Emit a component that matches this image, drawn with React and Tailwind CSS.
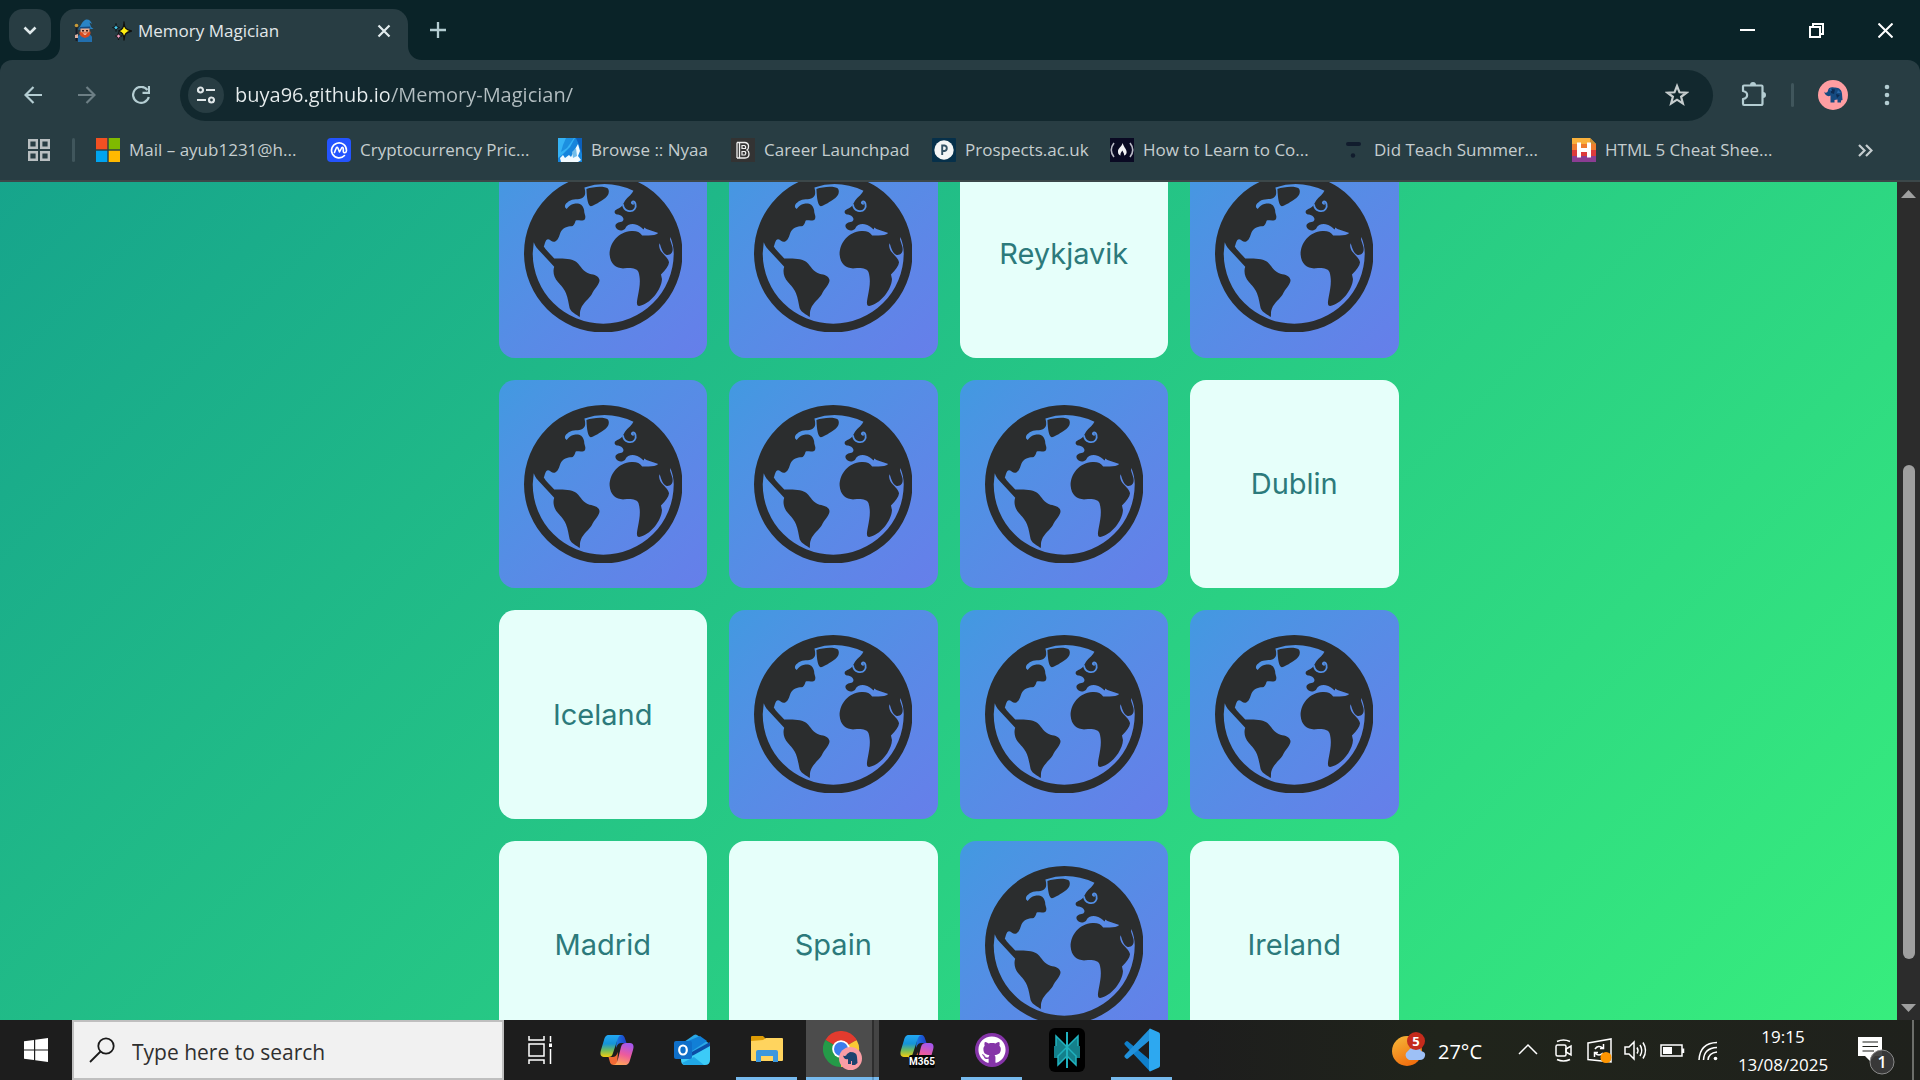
import React from "react";
import { FaGithub } from "react-icons/fa";

/* ---------- game ---------- */

function Globe() {
  return (
    <svg viewBox="105 105 472 472" className="w-[76%]" aria-hidden="true">
      <path
        fill="#2b2d2e"
        fillRule="evenodd"
        d="M105 341a236 236 0 1 0 472 0a236 236 0 1 0 -472 0Z
        M285 145Q358 121 431 155C425 168 410 176 403 190L398 199C388 211 374 209 375 220C378 229 390 224 398 232C405 240 400 247 392 248C380 250 374 257 379 265C386 276 399 275 406 268C412 254 428 252 440 256C452 260 456 267 462 270L463 264L470 269L505 281C495 290 480 288 457 288C450 278 440 274 425 275C385 278 360 310 360 345C362 375 382 388 405 386C425 384 441 386 446 397C453 420 450 440 444 470C440 490 440 498 448 498C480 494 515 450 516 418L513 404C528 390 536 378 537 368C535 355 520 345 513 335C508 325 506 318 509 311C514 325 518 342 530 346C545 347 550 335 547 322L540 300L541 293C548 310 551 325 551 341A210 210 0 0 1 131 341L134 308C138 320 145 327 155 338L195 381C190 395 194 414 206 427C215 438 222 443 230 460C236 475 238 492 241 505C248 520 262 524 271 531C273 520 270 517 275 505C281 490 300 475 306 465C315 445 330 435 330 421C328 408 315 405 300 402C280 396 275 380 262 368C250 357 225 356 195 357C185 345 170 332 164 321C168 312 168 300 177 299C185 300 188 309 198 306C210 300 210 285 216 275C226 260 240 262 250 260C260 252 256 242 262 243C275 243 284 245 287 238C290 228 284 225 284 212C280 195 270 192 258 193C240 196 238 205 232 209C224 205 226 195 234 190C245 178 262 182 275 178C290 172 287 160 287 155Z
        M291 150C310 142 345 140 355 148C362 160 355 172 340 182C325 192 312 200 304 201C296 200 292 180 291 150Z"
      />
      <path d="M400 197C402 217 426 220 434 210C442 200 436 186 429 187C424 189 426 193 430 194" fill="none" stroke="#528fe6" strokeWidth="5.500" strokeLinecap="round" />
    </svg>
  );
}

const cards = [
  null, null, "Reykjavik", null,
  null, null, null, "Dublin",
  "Iceland", null, null, null,
  "Madrid", "Spain", null, "Ireland",
];

function Card({ label }) {
  return label ? (
    <button className="flex aspect-square items-center justify-center rounded-2xl bg-[#e6fffa] font-['Inter',sans-serif] text-[29px] text-[#2c7a7b]">
      {label}
    </button>
  ) : (
    <button aria-label="Hidden card" className="flex aspect-square items-center justify-center rounded-2xl bg-linear-135 from-[#4299e1] to-[#667eea]">
      <Globe />
    </button>
  );
}

function Game() {
  return (
    <main className="flex min-h-0 flex-1 overflow-hidden">
      <div className="min-w-0 flex-1 overflow-hidden">
        <div className="-mt-[440px] bg-[linear-gradient(135deg,#11998e,#38ef7d)] pt-[407px] pb-10">
          <div className="mx-auto grid max-w-[900px] grid-cols-4 gap-[22px]">
            {cards.map((c, i) => <Card key={i} label={c} />)}
          </div>
        </div>
      </div>
      <div className="flex w-[23px] flex-col items-center bg-[#2c2c2c]">
        <div className="flex h-6 items-center"><svg width="15" height="8" viewBox="0 0 15 8"><path d="M0 8L7.500 0L15 8Z" fill="#9f9f9f" /></svg></div>
        <div className="grow-[259]" />
        <div className="w-3 grow-[494] rounded-full bg-[#9f9f9f]" />
        <div className="grow-[37]" />
        <div className="flex h-6 items-center"><svg width="15" height="8" viewBox="0 0 15 8"><path d="M0 0L7.500 8L15 0Z" fill="#9f9f9f" /></svg></div>
      </div>
    </main>
  );
}

/* ---------- shared drawings ---------- */

function Elephant({ size }) {
  return (
    <svg width={size} height={size} viewBox="0 0 30 30">
      <circle cx="15" cy="15" r="15" fill="#ff9ea2" />
      <path d="M6 11.500C7 13.500 9.500 13 10 10.500C10.500 7.500 13 7 16 7.500C21 7 24 10 24 14L24.500 20L23 20.500V22.500H19.500V19.500L16.500 20V22.500H12.500V15.500C10.500 17 7 16 6 11.500Z" fill="#154a80" />
      <path d="M13 9L17 9.500L16 14L13 13ZM18 14L22 15L19 18Z" fill="#0c2c54" />
      <path d="M11 10L13 8L14 11Z M20 10L23 13L19 13Z" fill="#2a68a8" />
    </svg>
  );
}

/* ---------- tab strip ---------- */

function Wizard() {
  return (
    <svg width="20" height="24" viewBox="0 0 20 24">
      <path d="M5 9C7 7 8 2 12 0.500C15 0 17 2 18 5L15.500 3.500L17 8L19.500 10L4 10.500Z" fill="#2a84c6" />
      <path d="M6 8L16 7.500L16.500 9.500L5 10Z" fill="#174a80" />
      <path d="M6.500 9.500H15.500V14H6.500Z" fill="#e8a88c" />
      <path d="M8 11h2v1.500H8ZM12 11h2v1.500H12Z" fill="#3a1c1c" />
      <path d="M4 23V17L7 14.500H15L18 17.500V23Z" fill="#226fae" />
      <path d="M5.500 12.500L8 13.500H14L16.500 12.500C17 17 14 18 11 19C8 18 5 17 5.500 12.500Z" fill="#d84a20" />
      <path d="M8.500 14.500H13.500L11 16Z" fill="#f5e3d8" />
      <path d="M2.500 7V22" stroke="#161b29" strokeWidth="1.800" />
      <circle cx="2.500" cy="6.500" r="1.800" fill="#c79a37" />
      <path d="M1 16L4 15V19L1 19Z" fill="#dcb0a0" />
    </svg>
  );
}

function Sparkles() {
  return (
    <svg width="20" height="20" viewBox="0 0 20 20" stroke="#101010" strokeLinejoin="round">
      <path d="M12 1C12.300 7 13.500 8.500 19.500 10C13.500 11.500 12.300 13 12 19C11.700 13 10.500 11.500 6.500 10C10.500 8.500 11.700 7 12 1Z" fill="#ffee10" strokeWidth="1.300" />
      <path d="M4 2.500C4.300 5.500 5 6 7.500 6.500C5 7 4.300 8 4 10.500C3.700 8 3 7 0.500 6.500C3 6 3.700 5.500 4 2.500Z" fill="#45c8ec" strokeWidth="0.900" />
      <path d="M6.500 11.500C6.800 14 7.500 14.500 10 15C7.500 15.500 6.800 16.500 6.500 19C6.200 16.500 5.500 15.500 3.500 15C5.500 14.500 6.200 14 6.500 11.500Z" fill="#f7a0c4" strokeWidth="0.900" />
    </svg>
  );
}

function Foot({ flip }) {
  return (
    <svg width="14" height="14" viewBox="0 0 14 14" className={flip ? "-scale-x-100" : ""}>
      <path d="M14 0V14H0C8 14 14 8 14 0Z" fill="#283d43" />
    </svg>
  );
}

function TabStrip() {
  return (
    <header className="flex h-[60px] shrink-0 bg-[#0a2328]">
      <button aria-label="Search tabs" className="mt-[9px] ml-[9px] -mr-[5px] flex size-[42px] items-center justify-center rounded-[14px] bg-[#283d43]">
        <svg width="14" height="9" viewBox="0 0 14 9" fill="none" stroke="#dfe9eb" strokeWidth="2.600"><path d="M1.500 1.500L7 7L12.500 1.500" /></svg>
      </button>
      <div className="flex items-end"><Foot /></div>
      <div className="mt-[9px] flex w-[348px] items-center rounded-t-[15px] bg-[#283d43] pr-[17px] pb-2 pl-[14px]">
        <Wizard />
        <span className="mr-[6px] ml-[18px]"><Sparkles /></span>
        <span className="flex-1 text-[17px] whitespace-nowrap text-[#e2e8ea]">Memory Magician</span>
        <button aria-label="Close tab">
          <svg width="14" height="14" viewBox="0 0 14 14" stroke="#e2ecee" strokeWidth="2.200"><path d="M1.500 1.500L12.500 12.500M12.500 1.500L1.500 12.500" /></svg>
        </button>
      </div>
      <div className="flex items-end"><Foot flip /></div>
      <button aria-label="New tab" className="ml-2 flex w-4 items-center">
        <svg width="16" height="16" viewBox="0 0 16 16" stroke="#b4cdd2" strokeWidth="2.300"><path d="M8 0V16M0 8H16" /></svg>
      </button>
      <div className="ml-auto flex">
        <button aria-label="Minimize" className="flex w-[69px] items-center justify-center"><svg width="15" height="15" viewBox="0 0 15 15"><path d="M0 6H15V8H0Z" fill="#fff" /></svg></button>
        <button aria-label="Restore" className="flex w-[69px] items-center justify-center"><svg width="15" height="15" viewBox="0 0 15 15" fill="none" stroke="#fff" strokeWidth="2"><path d="M1 4H11V14H1ZM4 4V1H14V11H11" /></svg></button>
        <button aria-label="Close" className="flex w-[69px] items-center justify-center"><svg width="15" height="15" viewBox="0 0 15 15" stroke="#fff" strokeWidth="2"><path d="M0.500 0.500L14.500 14.500M14.500 0.500L0.500 14.500" /></svg></button>
      </div>
    </header>
  );
}

/* ---------- toolbar ---------- */

function Toolbar() {
  return (
    <div className="bg-[#0a2328]">
      <nav className="flex h-[70px] items-center rounded-t-xl bg-[#283d43] pl-[6px]">
        <button aria-label="Back" className="flex w-[54px] justify-center">
          <svg width="18" height="18" viewBox="0 0 18 18" fill="none" stroke="#b4cdd2" strokeWidth="2.200"><path d="M18 9H1.500M9.500 1L1.500 9L9.500 17" /></svg>
        </button>
        <button aria-label="Forward" className="flex w-[54px] justify-center">
          <svg width="18" height="18" viewBox="0 0 18 18" fill="none" stroke="#6d7f85" strokeWidth="2.200"><path d="M0 9H16.500M8.500 1L16.500 9L8.500 17" /></svg>
        </button>
        <button aria-label="Reload" className="flex w-[54px] justify-center">
          <svg width="18" height="18" viewBox="0 0 18 18" fill="none" stroke="#b4cdd2" strokeWidth="2.200"><path d="M15.500 4A8 8 0 1 0 16.800 11" /><path d="M17 0V6.800H10.500" /></svg>
        </button>
        <div className="ml-3 flex h-[51px] flex-1 items-center rounded-full bg-[#12282e] pr-6 pl-2">
          <button aria-label="View site information" className="flex size-9 items-center justify-center rounded-full bg-[#283d43]">
            <svg width="18" height="18" viewBox="0 0 18 18" fill="none" stroke="#dfe6e8" strokeWidth="2.200"><circle cx="3.500" cy="4" r="2.500" /><path d="M9 4H18M0 14H9" /><circle cx="14.500" cy="14" r="2.500" /></svg>
          </button>
          <input
            aria-label="Address"
            defaultValue="buya96.github.io/Memory-Magician/"
            className="ml-[11px] min-w-0 flex-1 bg-[linear-gradient(90deg,#e8eeef_154px,#b4bfc2_154px)] bg-clip-text text-[20px] text-transparent outline-none"
          />
          <button aria-label="Bookmark this tab">
            <svg width="24" height="24" viewBox="0 0 24 24" fill="none" stroke="#c5cccd" strokeWidth="2.200"><path d="M12 3L14.500 9.300L21.500 9.700L16.100 13.800L17.900 20.500L12 16.700L6.100 20.500L7.900 13.800L2.500 9.700L9.500 9.300Z" /></svg>
          </button>
        </div>
        <button aria-label="Extensions" className="ml-7">
          <svg width="26" height="26" viewBox="0 0 26 26" fill="none" stroke="#b4cdd2" strokeWidth="2.200" strokeLinejoin="round">
            <path d="M3 3.500H20.500Q21.500 3.500 21.500 4.500V21.500Q21.500 23 20 23H3Q2 23 2 21.500V17C7.500 16 7.500 10 2 9V4.500Q2 3.500 3 3.500Z" />
            <path d="M9 3A3 3 0 0 1 15 3ZM22 10A3 3 0 0 1 22 16Z" fill="#b4cdd2" stroke="none" />
          </svg>
        </button>
        <span className="ml-6 h-6 w-[3px] rounded bg-[#40565c]" />
        <button aria-label="Profile" className="ml-6"><Elephant size={30} /></button>
        <button aria-label="Menu" className="mr-[30px] ml-9">
          <svg width="6" height="24" viewBox="0 0 6 24" fill="#b4cdd2"><circle cx="3" cy="4" r="2.300" /><circle cx="3" cy="12" r="2.300" /><circle cx="3" cy="20" r="2.300" /></svg>
        </button>
      </nav>
    </div>
  );
}

/* ---------- bookmarks ---------- */

const Ico = ({ children }) => <svg width="24" height="24" viewBox="0 0 24 24" className="shrink-0">{children}</svg>;

const bookmarks = [
  { w: "w-[231px]", text: "Mail – ayub1231@h...", icon: <Ico><path d="M0 0H11.300V11.300H0Z" fill="#f25022" /><path d="M12.700 0H24V11.300H12.700Z" fill="#7fba00" /><path d="M0 12.700H11.300V24H0Z" fill="#00a4ef" /><path d="M12.700 12.700H24V24H12.700Z" fill="#ffb900" /></Ico> },
  { w: "w-[231px]", text: "Cryptocurrency Pric...", icon: <Ico><rect width="24" height="24" rx="4" fill="#2454ff" /><path d="M17.500 17.500A7.500 7.500 0 1 1 19.500 12.500C19.500 15 16.500 15.500 16.300 13.500V10.500C16 9 14.800 9 14.300 10.500L12.500 14L11 10.300C10.500 9 9.500 9 9 10.500L7.500 14.500" fill="none" stroke="#fff" strokeWidth="1.600" strokeLinecap="round" strokeLinejoin="round" /></Ico> },
  { w: "w-[173px]", text: "Browse :: Nyaa", icon: <Ico><rect width="24" height="24" fill="#1685dc" /><path d="M0 0H17L12 9L4 17L0 20Z" fill="#35b2f4" /><path d="M8 0H16L9 10L3 14L5 7Z" fill="#1c8fe0" /><path d="M2 20L5 17L7 20L11 17L13 19L16 13L20 6L22 13L20 18L23 22L20 24H3Z" fill="#f2fbff" /><path d="M14 14L18 10L19 18L15 20Z" fill="#71bdea" /><path d="M18 0H24V16L21 7Z" fill="#0b5fbb" /></Ico> },
  { w: "w-[201px]", text: "Career Launchpad", icon: <Ico><rect width="24" height="24" fill="#333333" /><path d="M6 4.500H14Q18 5 17.500 9Q17.500 11 16 12Q18 13 18 16Q18 20 14 20H6M8.500 4.500V20M6 4.500V20" fill="none" stroke="#eee" strokeWidth="1.300" /><path d="M11 7.500H13.500Q15 8 14.500 10.500H11ZM11 13.500H14Q15.500 15 14 17H11Z" fill="none" stroke="#eee" strokeWidth="1.200" /></Ico> },
  { w: "w-[178px]", text: "Prospects.ac.uk", icon: <Ico><rect width="24" height="24" rx="1" fill="#06304a" /><circle cx="12" cy="12" r="9.700" fill="#f4f5f5" /><path d="M10.200 17V7.500H12.500A2.800 2.800 0 0 1 12.500 13H10.200" fill="none" stroke="#345264" strokeWidth="1.900" /></Ico> },
  { w: "w-[231px]", text: "How to Learn to Co...", icon: <Ico><rect width="24" height="24" fill="#0a0a23" /><path d="M4 5Q-1.500 12 4 19M20 5Q25.500 12 20 19" fill="none" stroke="#b9bac5" strokeWidth="1.600" /><path d="M12.500 5C12 9 7.500 10 8 14C8 16 9 17 10.500 17.500C10 15 11.500 14 12.500 12.500C13 15 14.500 15 14 17.500C16 17 17 15.500 16.500 13C15.500 10 14 9 12.500 5Z" fill="#f2f2f4" /></Ico> },
  { w: "w-[231px]", text: "Did Teach Summer...", icon: <Ico><rect x="5" y="4" width="15" height="4" rx="2" fill="#111c2d" /><circle cx="12" cy="17.500" r="2.200" fill="#111c2d" /></Ico> },
  { w: "w-[210px]", text: "HTML 5 Cheat Shee...", icon: <Ico><path d="M0 0H18L24 6V24H0Z" fill="#f9b13c" /><path d="M0 6H24V12H0Z" fill="#ef7c2e" /><path d="M0 12H24V18H0Z" fill="#dd3b3c" /><path d="M0 18H24V24H0Z" fill="#8b3d93" /><path d="M18 0V6H24Z" fill="#c98d34" /><path d="M7 4.500V19.500M17 4.500V19.500M7 12H17" stroke="#fff" strokeWidth="4" /></Ico> },
];

function Bookmarks() {
  return (
    <nav className="flex h-[52px] shrink-0 items-center border-b-2 border-[#3c4749] bg-[#283d43] pb-[10px] pl-7 text-[17px] text-[#c5cdcf]">
      <button aria-label="All bookmarks">
        <svg width="22" height="22" viewBox="0 0 22 22" fill="none" stroke="#b9bfc1" strokeWidth="2.400"><path d="M1.200 1.200H8.800V8.800H1.200ZM13.200 1.200H20.800V8.800H13.200ZM1.200 13.200H8.800V20.800H1.200ZM13.200 13.200H20.800V20.800H13.200Z" /></svg>
      </button>
      <span className="mr-[21px] ml-[22px] h-6 w-[3px] rounded bg-[#40565c]" />
      {bookmarks.map((b) => (
        <a key={b.text} href="#" className={`flex shrink-0 items-center gap-[9px] whitespace-nowrap ${b.w}`}>
          {b.icon}
          {b.text}
        </a>
      ))}
      <button aria-label="More bookmarks" className="mr-[47px] ml-auto">
        <svg width="15" height="13" viewBox="0 0 15 13" fill="none" stroke="#c5cdcf" strokeWidth="2.200"><path d="M1 1L6.500 6.500L1 12M8 1L13.500 6.500L8 12" /></svg>
      </button>
    </nav>
  );
}

/* ---------- taskbar ---------- */

function CopilotIcon({ label }) {
  return (
    <svg width="36" height="36" viewBox="0 0 36 36" aria-hidden="true">
      <defs>
        <linearGradient id="cpA" x1="0" y1="0" x2="0" y2="1"><stop offset="0" stopColor="#23a7f2" /><stop offset=".4" stopColor="#1593d8" /><stop offset=".7" stopColor="#71bb5c" /><stop offset="1" stopColor="#f4ce10" /></linearGradient>
        <linearGradient id="cpB" x1="0.600" y1="0" x2="0.300" y2="1"><stop offset="0" stopColor="#a557ed" /><stop offset=".5" stopColor="#ee5b9c" /><stop offset="1" stopColor="#ffa857" /></linearGradient>
        <linearGradient id="cpC" x1="0" y1="0" x2="1" y2="0"><stop offset="0" stopColor="#1b7be2" /><stop offset="1" stopColor="#1b3fc9" /></linearGradient>
      </defs>
      <path d="M18 3H22C25 3 25.500 5 26.500 8L27.500 11H22C19 11 18 14 17 16Z" fill="url(#cpC)" />
      <path d="M10 25H14C17 25 18 22 19 20L18 33H15C11 33 11 30 9.500 25Z" fill="#f26a35" />
      <path d="M10 3H23C20 3 19 6 18 9L14 21C13 24 12 25 9 25H5C1 25 1 21 2 18L5 8C6 4.500 7 3 10 3Z" fill="url(#cpA)" />
      <path d="M26 33H14C17 33 18 30 19 27L22 15C23 12 24 11 27 11H31C35 11 35 15 34 18L31 28C30 31.500 29 33 26 33Z" fill="url(#cpB)" />
      {label && <><rect x="10" y="23" width="26" height="13" rx="2" fill="#050505" /><text x="23" y="33" textAnchor="middle" fontSize="10" fontWeight="700" fill="#fff" fontFamily="Roboto, sans-serif">M365</text></>}
    </svg>
  );
}

function OutlookIcon() {
  return (
    <svg width="36" height="36" viewBox="0 0 36 36">
      <path d="M7 12L20 3Q21.500 2 23 3L36 12V18L22 25L7 20Z" fill="#2aa8e6" />
      <path d="M14 9L26 4L33 9L18 19Z" fill="#117fd6" />
      <path d="M16 21L36 10V16L20 25Z" fill="#0b4da6" />
      <path d="M7 22L18 24L36 14V28Q36 33 31 33H11Q7 33 7 28Z" fill="#3ccbf7" />
      <path d="M8 31L20 25L30 33H12Q9 33 8 31Z" fill="#20a7e6" />
      <rect y="9" width="18" height="18" rx="2" fill="#0f6fc9" />
      <ellipse cx="9" cy="18" rx="3.800" ry="4.500" fill="none" stroke="#fff" strokeWidth="2.200" />
    </svg>
  );
}

function ExplorerIcon() {
  return (
    <svg width="36" height="36" viewBox="0 0 36 36">
      <path d="M2 5Q2 4 3 4H14L17 7V12H2Z" fill="#dd9b05" />
      <path d="M2 9L14 8L17 6H33Q34 6 34 7V28Q34 29 33 29H3Q2 29 2 28Z" fill="#ffd45e" />
      <path d="M7 30V20Q7 18 9 18H27Q29 18 29 20V30H24V24H12V30Z" fill="#3b97dc" />
    </svg>
  );
}

function ChromeIcon() {
  return (
    <svg width="40" height="40" viewBox="0 0 40 40">
      <path d="M18 18L2.400 9A18 18 0 0 1 33.600 9Z" fill="#e33b2e" />
      <path d="M18 18L33.600 9A18 18 0 0 1 18 36Z" fill="#fcc934" />
      <path d="M18 18L18 36A18 18 0 0 1 2.400 9Z" fill="#249a48" />
      <path d="M18 9.500H33.800L32 6.500H18Z" fill="#e33b2e" />
      <circle cx="18" cy="18" r="8.800" fill="#fff" />
      <circle cx="18" cy="18" r="7" fill="#3b7ded" />
      <circle cx="27.500" cy="27.500" r="11.500" fill="#fa9da5" />
      <path d="M20 24.500Q23 26 24 23L27 21Q34 21 34 26L34.500 32L32 34H29V30H28V33H25V28Q21 29 20 24.500Z" fill="#1c436f" />
    </svg>
  );
}

function PerplexityIcon() {
  return (
    <svg width="36" height="44" viewBox="0 0 36 44">
      <rect width="36" height="44" y="0" rx="6" fill="#000" />
      <path d="M18 19L7 8V18H5V30H9V37L18 28L27 37V30H31V18H29V8Z" fill="#14808b" />
      <g fill="none" stroke="#20b2bf" strokeWidth="1.500">
        <path d="M18 4V40" strokeWidth="2" />
        <path d="M18 19L7 8V18M18 19L29 8V18M18 19L9 28V37L18 28L27 37V28Z" />
      </g>
    </svg>
  );
}

function VscodeIcon() {
  return (
    <svg width="36" height="44" viewBox="0 0 36 44">
      <path d="M26 32L4 13.500Q3 12.700 2 13.500L0.500 15Q0 16 1 17L26 43.500Z" fill="#0f7fca" />
      <path d="M26 12L4 30.500Q3 31.300 2 30.500L0.500 29Q0 28 1 27L26 0.500Z" fill="#2192dc" />
      <path d="M26 0.500L35 4.500Q36 5 36 6.500V37.500Q36 39 35 39.500L26 43.500Q25 43 25 41V3Q25 1 26 0.500Z" fill="#2da8f0" />
    </svg>
  );
}

const apps = [
  { name: "Task View", icon: <svg width="28" height="28" viewBox="0 0 28 28" fill="none" stroke="#fff" strokeWidth="1.500"><path d="M1 8H16V20H1ZM1 0V4H16V0M1 28V24H16V28M22.500 0V6M22.500 13V28" /><path d="M21 7.500H24V11H21Z" fill="#fff" stroke="none" /></svg> },
  { name: "Copilot", icon: <CopilotIcon /> },
  { name: "Outlook", icon: <OutlookIcon /> },
  { name: "File Explorer", icon: <ExplorerIcon />, open: true },
  { name: "Chrome", icon: <ChromeIcon />, active: true },
  { name: "Microsoft 365 Copilot", icon: <CopilotIcon label /> },
  { name: "GitHub Desktop", open: true, icon: <span className="flex size-[34px] items-center justify-center rounded-full bg-[#8534a8]"><FaGithub size={28} color="#fff" /></span> },
  { name: "Perplexity", icon: <PerplexityIcon /> },
  { name: "Visual Studio Code", icon: <VscodeIcon />, open: true },
];

function TaskButton({ app }) {
  if (app.active) {
    return (
      <button aria-label={app.name} className="flex w-[75px] shrink-0 pl-[2px]">
        <span className="flex h-full w-[66px] items-center justify-center border-b-[3px] border-[#76b9ed] bg-[#4c4c4c] pt-1 pl-2">{app.icon}</span>
        <span className="h-full w-[2px] border-b-[3px] border-[#5f97c4] bg-[#2d2d2d]" />
        <span className="h-full w-[5px] border-b-[3px] border-[#76b9ed] bg-[#444]" />
      </button>
    );
  }
  return (
    <button aria-label={app.name} className="flex w-[75px] shrink-0 justify-center">
      <span className={`flex h-full w-[61px] items-center justify-center border-b-[3px] pt-[3px] ${app.open ? "border-[#76b9ed]" : "border-transparent"}`}>{app.icon}</span>
    </button>
  );
}

const trayIcons = [
  { name: "Show hidden icons", d: <path d="M5 18L14 9L23 18" /> },
  { name: "Camera", d: <><rect x="6" y="9" width="10" height="11" rx="1.500" /><path d="M16 13L21 10V19L16 16ZM7 5.500Q13.500 2.500 20 5.500M7 23.500Q13.500 26.500 20 23.500" /></> },
  { name: "Updates", d: <><path d="M2 7L25 3V26L2 23.500Z" /><path d="M9 13Q12 8.500 17 12M17.500 8V12.500H14M17 17Q13 21 9 17M8.500 21V16.500H12" /><circle cx="20" cy="21.500" r="5.500" fill="#ff9500" stroke="none" /></> },
  { name: "Volume", d: <path d="M3 11H7L12 6V23L7 18H3ZM15 11.500Q17 14.500 15 17.500M18 9Q21.500 14.500 18 20M21 6.500Q26 14.500 21 22.500" /> },
  { name: "Battery", d: <><path d="M3 9H24V20H3ZM25.500 12.500V17" /><path d="M5 11H14V18H5Z" fill="#fff" stroke="none" /></> },
  { name: "Network", d: <><path d="M5 24Q6 7 23 6.500M9.500 24Q10 12 23 11.500M14 24Q14.500 17 23 16" /><circle cx="21.500" cy="22.500" r="1.800" fill="#fff" stroke="none" /></> },
];

function Taskbar() {
  return (
    <footer className="flex h-[60px] shrink-0 bg-[linear-gradient(90deg,#1d1d1d_62%,#20241b_75%,#1f211c)] text-white">
      <button aria-label="Start" className="flex w-[72px] shrink-0 items-center justify-center">
        <svg width="24" height="24" viewBox="0 0 24 24" fill="#fff"><path d="M0 3.300L10 2V11.400H0ZM11.200 1.800L24 0V11.400H11.200ZM0 12.600H10V22L0 20.700ZM11.200 12.600H24V24L11.200 22.200Z" /></svg>
      </button>
      <label className="flex w-[432px] shrink-0 items-center gap-[17px] border-2 border-[#bfbfbf] bg-[#f1f1f1] pl-[15px]">
        <svg width="26" height="26" viewBox="0 0 26 26" fill="none" stroke="#1a1a1a" strokeWidth="1.800"><circle cx="17" cy="9" r="7.700" /><path d="M11.500 14.500L1 25" /></svg>
        <input aria-label="Type here to search" placeholder="Type here to search" className="min-w-0 flex-1 pt-[6px] text-[21px] outline-none placeholder:text-[#2f2f2f]" />
      </label>
      {apps.map((a) => <TaskButton key={a.name} app={a} />)}
      <div className="ml-auto flex items-center">
        <button className="mr-[28px] flex items-center gap-3">
          <svg width="34" height="36" viewBox="0 0 34 36">
            <defs><linearGradient id="sun" x1="0" y1="0" x2="0.500" y2="1"><stop offset="0" stopColor="#f6b93a" /><stop offset="1" stopColor="#f1700f" /></linearGradient></defs>
            <circle cx="15" cy="19" r="15" fill="url(#sun)" />
            <path d="M17 28A5 5 0 0 1 16 19Q19 14 24 17Q28 15 29 19Q34 20 33 24Q32 28 28 28Z" fill="#9dc0f6" />
            <circle cx="24" cy="9" r="9" fill="#c42b1c" />
            <text x="24" y="14" textAnchor="middle" fontSize="13" fontWeight="700" fill="#fff" fontFamily="Open Sans, sans-serif">5</text>
          </svg>
          <span className="pt-1 text-[20px]">27°C</span>
        </button>
        {trayIcons.map((t) => (
          <button key={t.name} aria-label={t.name} className="flex w-9 justify-center">
            <svg width="28" height="28" viewBox="0 0 28 28" fill="none" stroke="#fff" strokeWidth="1.500">{t.d}</svg>
          </button>
        ))}
        <button className="ml-[11px] w-[92px] pt-[2px] text-center text-[17px] leading-[28px]">
          <span className="block">19:15</span>
          <span className="block">13/08/2025</span>
        </button>
        <button aria-label="1 new notification" className="mr-[17px] ml-[29px] pt-[10px]">
          <svg width="37" height="40" viewBox="0 0 37 40">
            <path d="M0 2H24V21H17L12 26L7 21H0Z" fill="#fff" />
            <path d="M4.500 7H20M4.500 11.500H20M4.500 16H16" stroke="#1f211c" strokeWidth="1.200" />
            <circle cx="24" cy="27" r="12" fill="#3a3a3a" fillOpacity=".93" stroke="#8a8a8a" />
            <text x="24" y="33" textAnchor="middle" fontSize="16" fontWeight="600" fill="#fff" fontFamily="Open Sans, sans-serif">1</text>
          </svg>
        </button>
        <span className="mr-[6px] h-[60px] w-[2px] bg-[#6d6f6a]" />
      </div>
    </footer>
  );
}

export default function App() {
  return (
    <div className="flex h-screen flex-col overflow-hidden font-['Open_Sans','Noto_Sans',sans-serif]">
      <TabStrip />
      <Toolbar />
      <Bookmarks />
      <Game />
      <Taskbar />
    </div>
  );
}
